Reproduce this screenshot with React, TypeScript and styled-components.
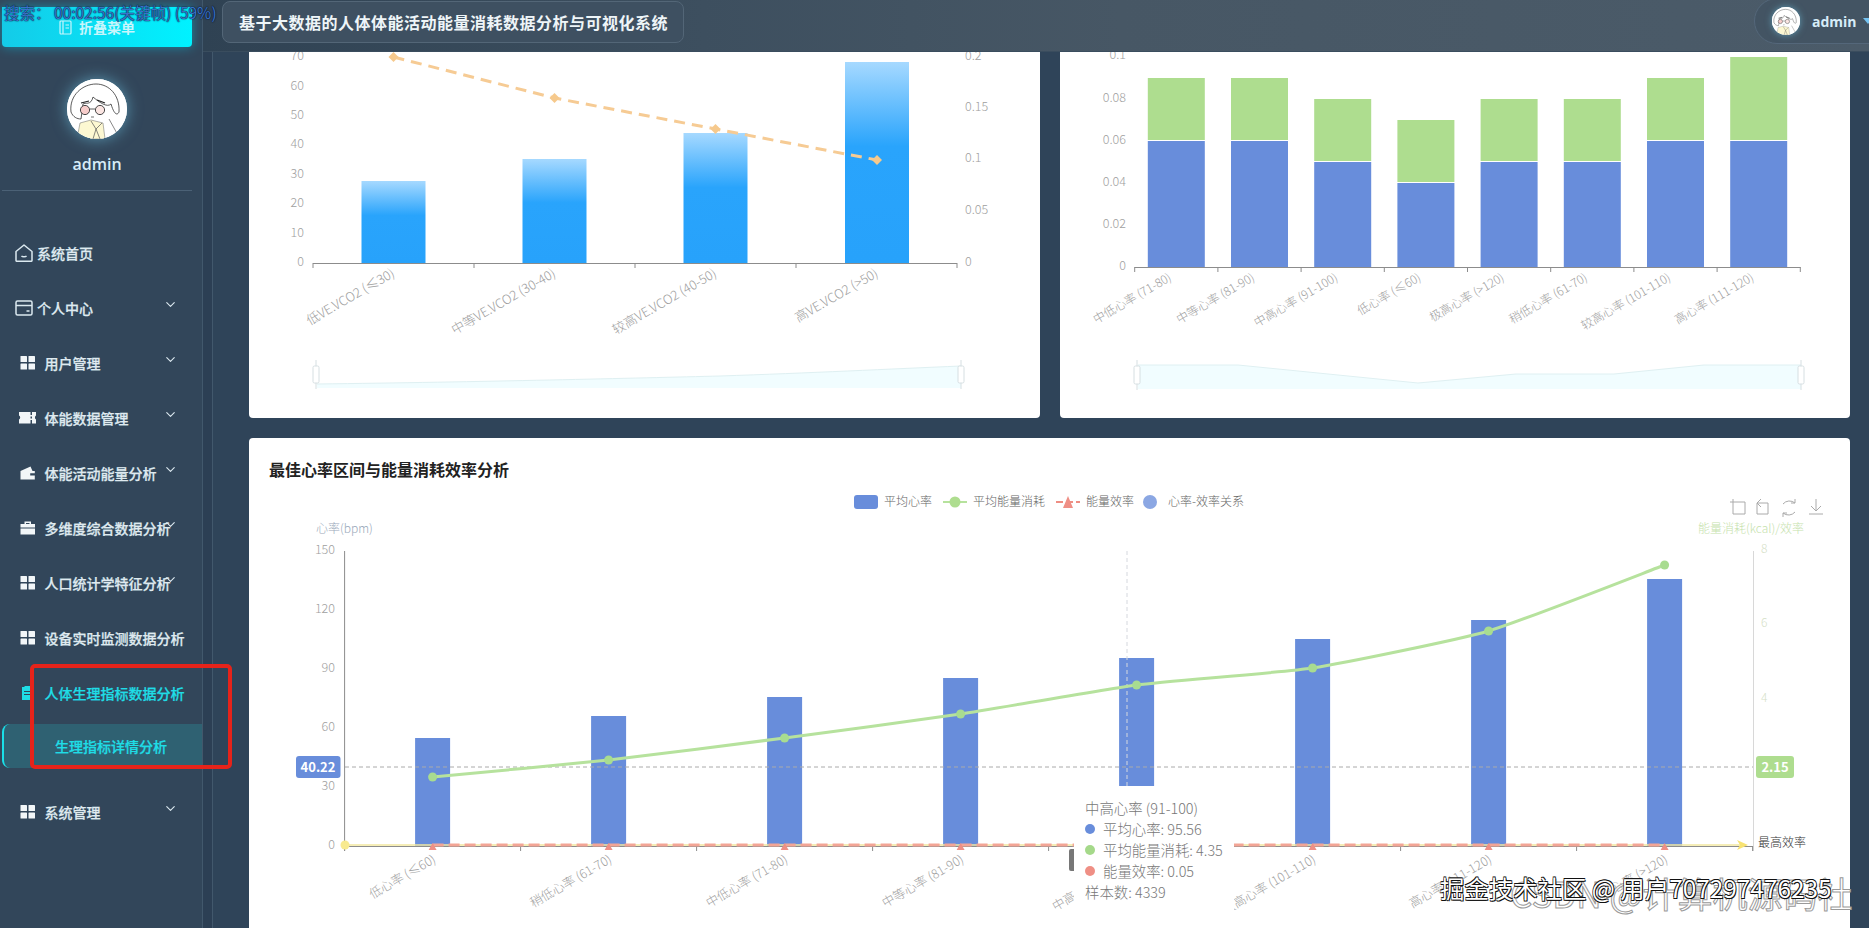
import React from "react";
import styled, { createGlobalStyle } from "styled-components";
import { ChevronDown } from "lucide-react";

const FONT = `"Noto Sans CJK SC", "Noto Sans", "Open Sans", sans-serif`;

const Global = createGlobalStyle`
  html, body { margin: 0; padding: 0; height: 100%; overflow: hidden; background: #2f4459; }
  #root { height: 100%; }
  * { box-sizing: border-box; }
`;

const Page = styled.div`
  position: relative;
  display: flex;
  width: 1869px;
  height: 928px;
  overflow: hidden;
  font-family: ${FONT};
  background: #2f4459;
`;

const Sidebar = styled.aside`
  flex: 0 0 203px;
  height: 100%;
  background: #32465a;
  border-right: 1px solid #42586c;
  display: flex;
  flex-direction: column;
`;

const CollapseButton = styled.button`
  flex: none;
  display: flex;
  align-items: center;
  justify-content: center;
  gap: 7px;
  width: 190px;
  height: 40px;
  margin: 7px 0 0 2px;
  border: 0;
  border-radius: 0 0 4px 4px;
  background: linear-gradient(90deg, #14cbe8, #00f2ff);
  box-shadow: 0 0 12px rgba(0, 220, 255, 0.45);
  color: #c8f6fc;
  font: 700 14px ${FONT};
`;

const Profile = styled.div`
  width: 190px;
  margin: 32px 0 0 2px;
  padding-bottom: 14px;
  border-bottom: 1px solid #4b6176;
  display: flex;
  flex-direction: column;
  align-items: center;
`;

const AvatarFrame = styled.div<{ $size: number }>`
  width: ${(p) => p.$size}px;
  height: ${(p) => p.$size}px;
  border-radius: 50%;
  overflow: hidden;
  background: #fff;
  box-shadow: 0 0 ${(p) => p.$size / 4}px rgba(120, 215, 245, 0.55);
  flex: none;
`;

const ProfileName = styled.div`
  margin-top: 13px;
  font: 600 16px/24px "Open Sans", ${FONT};
  color: #d6ecf8;
`;

const Menu = styled.nav`
  margin-top: 34px;
  display: flex;
  flex-direction: column;
`;

const MenuRow = styled.div<{ $outlined?: boolean; $active?: boolean; $gapAbove?: boolean }>`
  position: relative;
  height: 55px;
  flex: none;
  display: flex;
  align-items: center;
  padding-left: ${(p) => (p.$outlined ? 15 : 20)}px;
  margin-top: ${(p) => (p.$gapAbove ? 16 : 0)}px;
  gap: ${(p) => (p.$outlined ? 4 : 9)}px;
  color: ${(p) => (p.$active ? "#1fdde6" : "#dfeaf0")};
  font-size: 14px;
  font-weight: 500;
  -webkit-text-stroke: 0.25px currentColor;
  white-space: nowrap;
`;

const RowChevron = styled.span`
  position: absolute;
  top: 17px;
  left: 163px;
  display: flex;
  color: #dbe8f0;
`;

const SubRow = styled.div`
  height: 44px;
  margin: 4px 0 0 2px;
  padding-left: 51px;
  display: flex;
  align-items: center;
  border-left: 2px solid #1adfe8;
  border-radius: 8px 0 0 8px;
  background: #2f6172;
  color: #1fdde6;
  font-size: 14px;
  font-weight: 500;
  -webkit-text-stroke: 0.25px currentColor;
  flex: none;
`;

const Main = styled.main`
  flex: 1;
  min-width: 0;
  display: flex;
  flex-direction: column;
  height: 100%;
`;

const Header = styled.header`
  flex: 0 0 52px;
  display: flex;
  align-items: flex-start;
  padding-left: 19px;
  background: linear-gradient(90deg, #2f4253 0, #3d4f5f 30%, #475765 55%, #4b5b69 100%);
  border-bottom: 1px solid #3a4d5e;
`;

const TitlePill = styled.div`
  width: 462px;
  height: 42px;
  margin-top: 1px;
  padding-left: 16px;
  display: flex;
  align-items: center;
  background: #3e5061;
  border: 1px solid #536677;
  border-radius: 8px;
  color: #eef5f8;
  font-size: 16px;
  font-weight: 700;
  letter-spacing: 0.5px;
  white-space: nowrap;
`;

const UserPill = styled.div`
  width: 130px;
  height: 46px;
  margin: -2px -15px 0 auto;
  padding-left: 17px;
  display: flex;
  align-items: center;
  gap: 12px;
  background: #435463;
  border: 1px solid #54677a;
  border-radius: 23px 0 0 23px;
  color: #d6ecf8;
  font: 700 14px "Open Sans", ${FONT};
`;

const Caret = styled.span`
  width: 0;
  height: 0;
  margin-left: -6px;
  border-left: 5px solid transparent;
  border-right: 5px solid transparent;
  border-top: 6px solid #74c2f0;
`;

const Body = styled.div`
  flex: 1;
  min-height: 0;
  display: flex;
`;

const Strip = styled.div`
  flex: 0 0 10px;
  background: #2c3f54;
  border-right: 1px solid #42586c;
`;

const Content = styled.div`
  flex: 1;
  min-width: 0;
  padding: 0 19px 0 36px;
  display: grid;
  grid-template-columns: 791px 790px;
  grid-template-rows: 366px 490px;
  column-gap: 20px;
  row-gap: 20px;
`;

const Card = styled.section<{ $wide?: boolean; $open?: boolean }>`
  position: relative;
  background: #fff;
  border-radius: ${(p) => (p.$open ? "0 0 4px 4px" : "4px 4px 0 0")};
  overflow: hidden;
  grid-column: ${(p) => (p.$wide ? "1 / span 2" : "auto")};
`;

const CardTitle = styled.h3`
  margin: 0;
  height: 44px;
  padding: 20px 20px 0;
  font-size: 16px;
  line-height: 22px;
  font-weight: 700;
  color: #222;
`;

const ChartSvg = styled.svg`
  display: block;
`;

const AxisLabel = styled.text<{ $size?: number }>`
  font-family: ${FONT};
  font-size: ${(p) => p.$size || 12.5}px;
  font-weight: 300;
  fill: #9e9e9e;
`;

const LegendLabel = styled.text`
  font-family: ${FONT};
  font-size: 12px;
  font-weight: 300;
  fill: #666;
`;

const AxisName = styled.text<{ $tone?: string }>`
  font-family: ${FONT};
  font-size: 12px;
  font-weight: 300;
  fill: ${(p) => p.$tone || "#9aa9ba"};
`;

const TagText = styled.text`
  font-family: ${FONT};
  font-size: 13px;
  font-weight: 700;
  fill: #fff;
  text-anchor: middle;
`;

const Tooltip = styled.div`
  position: absolute;
  left: 825px;
  top: 348px;
  width: 160px;
  padding: 11px 8px 12px 11px;
  background: #fff;
  color: #777;
  font-size: 14.4px;
  font-weight: 300;
  line-height: 21px;
  white-space: nowrap;
`;

const TooltipRow = styled.div`
  display: flex;
  align-items: center;
  gap: 8px;
`;

const TooltipDot = styled.span<{ $color: string }>`
  width: 10px;
  height: 10px;
  border-radius: 50%;
  background: ${(p) => p.$color};
`;

const SearchBadge = styled.div`
  position: absolute;
  left: 4px;
  top: 1px;
  font-size: 15.5px;
  line-height: 22px;
  color: #3a72c8;
  text-shadow: 0 0 1.5px #04122e, 0 0 1px #04122e;
  white-space: nowrap;
`;

const RedBox = styled.div`
  position: absolute;
  left: 30px;
  top: 664px;
  width: 202px;
  height: 105px;
  border: 4px solid #e6231a;
  border-radius: 5px;
  pointer-events: none;
`;

const WatermarkBack = styled.div`
  position: absolute;
  left: 1510px;
  top: 868px;
  font-size: 35px;
  line-height: 50px;
  color: rgba(255, 255, 255, 0.85);
  -webkit-text-stroke: 1px #9a9a9a;
  white-space: nowrap;
`;

const WatermarkFront = styled.div`
  position: absolute;
  left: 1440px;
  top: 870px;
  font-size: 24.4px;
  line-height: 36px;
  color: #fff;
  text-shadow: 1px 1px 0 #111, -0.6px 0.6px 0 #111, 0.6px -0.6px 0 #111, -0.6px -0.6px 0 #111;
  white-space: nowrap;
`;

const Avatar = ({ size }: { size: number }) => (
  <AvatarFrame $size={size}>
    <svg width={size} height={size} viewBox="0 0 60 60">
      <rect width="60" height="60" fill="#fff" />
      <path d="M10 60 L13 44 L24 41 L36 44 L38 60 Z" fill="#fdf8d2" stroke="#666" strokeWidth="0.5" />
      <path d="M24 42 L29 50 L35 44 M29 50 L26 60 M29 50 L33 60 M42 40 L52 58" fill="none" stroke="#555" strokeWidth="0.7" />
      <path d="M4 33 C2 16 16 5 29 5 C42 5 53 16 52 33 C50 37 47 35 44 25 C40 29 32 23 26 18 C24 27 18 23 16 25 L14 40 C10 40 6 38 4 33 Z" fill="#fff" stroke="#333" strokeWidth="0.8" />
      <circle cx="18" cy="31" r="4.6" fill="#f7cdcb" stroke="#333" strokeWidth="0.9" />
      <circle cx="33" cy="31" r="4.6" fill="#fbe6e3" stroke="#333" strokeWidth="0.9" />
      <path d="M23 30 L28 30" stroke="#333" strokeWidth="0.8" />
      <path d="M14 24 L22 22 M30 21 L38 24" stroke="#222" strokeWidth="1.2" />
      <path d="M24 38 H27" stroke="#333" strokeWidth="0.7" />
    </svg>
  </AvatarFrame>
);

const MenuIcon = ({ kind, color = "#f2f6f8" }: { kind: string; color?: string }) => {
  if (kind === "home")
    return (
      <svg width="18" height="18" viewBox="0 0 18 18" fill="none" stroke="#dbe9f0" strokeWidth="1.5" strokeLinejoin="round">
        <path d="M9 1 L17 7.5 V16.5 C17 17 16.5 17.3 16 17.3 H2 C1.5 17.3 1 17 1 16.5 V7.5 Z" />
        <path d="M6.5 11.8 C7.4 13.2 10.6 13.2 11.5 11.8" />
      </svg>
    );
  if (kind === "card")
    return (
      <svg width="18" height="18" viewBox="0 0 18 18" fill="none" stroke="#dbe9f0" strokeWidth="1.5">
        <rect x="1" y="2" width="16" height="14" rx="1.5" />
        <path d="M1 6.5 H17 M11.5 12 H14.5" />
      </svg>
    );
  const paths: Record<string, React.ReactNode> = {
    grid: (
      <>
        <rect x="0.5" y="1" width="6.5" height="6" rx="0.6" />
        <rect x="8.5" y="1" width="6.5" height="6" rx="0.6" />
        <rect x="0.5" y="8.5" width="6.5" height="6" rx="0.6" />
        <rect x="8.5" y="8.5" width="6.5" height="6" rx="0.6" />
      </>
    ),
    ticket: (
      <path
        d="M-1 2 H16 V5.5 C14.6 6.2 14.6 8.8 16 9.5 V13.5 H-1 V9.5 C0.6 8.8 0.6 6.2 -1 5.5 Z M10.5 2 V5 H12 V2 Z M10.5 6.5 V8.5 H12 V6.5 Z M10.5 10 V13.5 H12 V10 Z"
        fillRule="evenodd"
      />
    ),
    wallet: <path d="M0.5 6 L10.5 1.5 L12.5 6 H14.8 V8.2 H10.2 V10.6 H14.8 V14.5 H0.5 Z" />,
    case: (
      <>
        <path d="M4.5 1.5 H11 V4 H15 V7.5 H0.5 V4 H4.5 Z M6 3 V4 H9.5 V3 Z" fillRule="evenodd" />
        <rect x="0.5" y="8.5" width="14.5" height="6" />
      </>
    ),
    clip: <path d="M2 2 H4.5 V1 H11 V2 H13 V15 H2 Z M4 6 V7 H11 V6 Z M4 9 V10 H11 V9 Z" fillRule="evenodd" />,
  };
  return (
    <svg width="15.5" height="15.5" viewBox="0 0 15.5 15.5" fill={color} style={{ overflow: "visible" }}>
      {paths[kind]}
    </svg>
  );
};

const menu = [
  { label: "系统首页", icon: "home", outlined: true },
  { label: "个人中心", icon: "card", outlined: true, chevron: true },
  { label: "用户管理", icon: "grid", chevron: true },
  { label: "体能数据管理", icon: "ticket", chevron: true },
  { label: "体能活动能量分析", icon: "wallet", chevron: true },
  { label: "多维度综合数据分析", icon: "case", chevron: true },
  { label: "人口统计学特征分析", icon: "grid", chevron: true },
  { label: "设备实时监测数据分析", icon: "grid" },
];

const smooth = (pts: number[][]) => {
  let d = `M${pts[0][0]} ${pts[0][1]}`;
  for (let i = 0; i < pts.length - 1; i++) {
    const p0 = pts[Math.max(0, i - 1)];
    const p1 = pts[i];
    const p2 = pts[i + 1];
    const p3 = pts[Math.min(pts.length - 1, i + 2)];
    d += ` C${p1[0] + (p2[0] - p0[0]) / 12} ${p1[1] + (p2[1] - p0[1]) / 12} ${p2[0] - (p3[0] - p1[0]) / 12} ${p2[1] - (p3[1] - p1[1]) / 12} ${p2[0]} ${p2[1]}`;
  }
  return d;
};

const RotatedLabel = ({ x, y, text, size = 12 }: { x: number; y: number; text: string; size?: number }) => (
  <AxisLabel $size={size} x={x} y={y} textAnchor="end" transform={`rotate(-30 ${x} ${y})`}>
    {text}
  </AxisLabel>
);

const SliderHandle = ({ x, top, bottom }: { x: number; top: number; bottom: number }) => (
  <g stroke="#d6dfe2" fill="#fff">
    <path d={`M${x} ${top} V${bottom}`} />
    <rect x={x - 3} y={top + 6} width="6" height={bottom - top - 12} rx="1.5" />
  </g>
);

const TopLeftChart = () => {
  const ticks = [313, 474, 635, 796, 957];
  const centers = [393.5, 554.5, 715.5, 877];
  const tops = [181, 159, 133, 62];
  const line = [57, 98, 129, 160];
  const names = ["低VE.VCO2 (≤30)", "中等VE.VCO2 (30-40)", "较高VE.VCO2 (40-50)", "高VE.VCO2 (>50)"];
  const left = [[0, 264], [10, 235], [20, 205], [30, 176], [40, 146], [50, 117], [60, 88], [70, 58]];
  const right = [["0", 264], ["0.05", 212], ["0.1", 160], ["0.15", 109], ["0.2", 58]] as [string, number][];
  return (
    <ChartSvg width="791" height="366" viewBox="249 52 791 366">
      <defs>
        <linearGradient id="barBlue" x1="0" y1="0" x2="0" y2="1">
          <stop offset="0" stopColor="#a6d9ff" />
          <stop offset="0.42" stopColor="#29a4fc" />
          <stop offset="1" stopColor="#27a2fb" />
        </linearGradient>
      </defs>
      {left.map(([v, y]) => (
        <AxisLabel key={v} x={304} y={y + 2} textAnchor="end">{v}</AxisLabel>
      ))}
      {right.map(([v, y]) => (
        <AxisLabel key={v} x={965} y={y + 2}>{v}</AxisLabel>
      ))}
      {centers.map((c, i) => (
        <rect key={c} x={c - 32} y={tops[i]} width="64" height={263 - tops[i]} fill="url(#barBlue)" />
      ))}
      <path d={`M313 263.5 H957`} stroke="#8c8c8c" />
      {ticks.map((t) => (
        <path key={t} d={`M${t} 263 V268`} stroke="#8c8c8c" />
      ))}
      <path d={`M${centers.map((c, i) => `${c} ${line[i]}`).join(" L")}`} fill="none" stroke="#f6cb94" strokeWidth="3" strokeDasharray="11 7" />
      {centers.map((c, i) => (
        <path key={c} d={`M${c} ${line[i] - 5} L${c + 5} ${line[i]} L${c} ${line[i] + 5} L${c - 5} ${line[i]} Z`} fill="#f6c98c" />
      ))}
      {centers.map((c, i) => (
        <RotatedLabel key={c} x={c + 2} y={276} text={names[i]} size={13} />
      ))}
      <path d="M317 384 C480 382 640 378 720 376 C810 373 890 369 961 366 V388 H317 Z" fill="#f1fdff" stroke="none" />
      <path d="M317 384 C480 382 640 378 720 376 C810 373 890 369 961 366" fill="none" stroke="#dff0f2" />
      <SliderHandle x={316} top={360} bottom={389} />
      <SliderHandle x={961} top={360} bottom={389} />
    </ChartSvg>
  );
};

const TopRightChart = () => {
  const labels = ["中低心率 (71-80)", "中等心率 (81-90)", "中高心率 (91-100)", "低心率 (≤60)", "极高心率 (>120)", "稍低心率 (61-70)", "较高心率 (101-110)", "高心率 (111-120)"];
  const blue = [0.06, 0.06, 0.05, 0.04, 0.05, 0.05, 0.06, 0.06];
  const total = [0.09, 0.09, 0.08, 0.07, 0.08, 0.08, 0.09, 0.1];
  const base = 267;
  const unit = 2100;
  const xs = Array.from({ length: 9 }, (_, i) => 1134.7 + i * 83.2);
  const area = [[1138, 365], [1238, 365], [1418, 383], [1516, 374], [1614, 374], [1704, 365], [1801, 365]];
  const areaD = area.map((p) => `${p[0]} ${p[1]}`).join(" L");
  return (
    <ChartSvg width="790" height="366" viewBox="1060 52 790 366">
      {["0", "0.02", "0.04", "0.06", "0.08", "0.1"].map((v, i) => (
        <AxisLabel key={v} x={1126} y={base - i * 42 + (i === 5 ? 2 : 3)} textAnchor="end">{v}</AxisLabel>
      ))}
      {labels.map((l, i) => {
        const c = xs[i] + 41.6;
        return (
          <g key={l}>
            <rect x={c - 28.5} y={base - blue[i] * unit} width="57" height={blue[i] * unit} fill="#688ddb" />
            <rect x={c - 28.5} y={base - total[i] * unit} width="57" height={(total[i] - blue[i]) * unit - 1} fill="#aedd8f" />
            <RotatedLabel x={c - 4} y={280} text={l} />
          </g>
        );
      })}
      <path d={`M1134.7 267.5 H1800.5`} stroke="#8c8c8c" />
      {xs.map((t) => (
        <path key={t} d={`M${t} 267 V272`} stroke="#8c8c8c" />
      ))}
      <path d={`M${areaD} V389 H1138 Z`} fill="#f1fdff" />
      <path d={`M${areaD}`} fill="none" stroke="#dff0f2" />
      <SliderHandle x={1137} top={360} bottom={390} />
      <SliderHandle x={1801} top={360} bottom={390} />
    </ChartSvg>
  );
};

const BottomChart = () => {
  const base = 846;
  const labels = ["低心率 (≤60)", "稍低心率 (61-70)", "中低心率 (71-80)", "中等心率 (81-90)", "中高心率 (91-100)", "较高心率 (101-110)", "高心率 (111-120)", "极高心率 (>120)"];
  const centers = labels.map((_, i) => 432.6 + i * 176);
  const tops = [738, 716, 697, 678, 658, 639, 620, 579];
  const ys = [777, 760, 738, 714, 685, 668, 631, 565];
  const pts = centers.map((c, i) => [c, ys[i]]);
  const ticks = Array.from({ length: 9 }, (_, i) => 344.6 + i * 176);
  const leftLabels = [0, 30, 60, 90, 120, 150];
  const rightLabels = [[8, 553], [6, 627], [4, 702]];
  return (
    <ChartSvg width="1601" height="446" viewBox="249 482 1601 446">
      <rect x="854" y="495" width="24" height="14" rx="3" fill="#688ddb" />
      <LegendLabel x="884" y="506">平均心率</LegendLabel>
      <path d="M943 502 H967" stroke="#b6e29d" strokeWidth="2" />
      <circle cx="955" cy="502" r="5.5" fill="#aedd8f" />
      <LegendLabel x="973" y="506">平均能量消耗</LegendLabel>
      <path d="M1056 502 H1080" stroke="#ee8e83" strokeWidth="2" strokeDasharray="7 3" />
      <path d="M1068 496 L1073 508 H1063 Z" fill="#ef8f85" />
      <LegendLabel x="1086" y="506">能量效率</LegendLabel>
      <circle cx="1150" cy="502" r="7" fill="#8ba7e3" />
      <LegendLabel x="1168" y="506">心率-效率关系</LegendLabel>

      <g fill="none" stroke="#aaa" strokeWidth="1">
        <path d="M1733 499 V514 H1745 V502 H1730" />
        <path d="M1757 503 H1768 V514 H1757 V503 M1761 499 L1757 503 L1761 507" />
        <path d="M1783 504 A8.5 8.5 0 0 1 1795 503 M1795 512 A8.5 8.5 0 0 1 1783 513" />
        <path d="M1795 499 V503 H1791 M1783 517 V513 H1787" />
        <path d="M1816 499 V511 M1811 506 L1816 511 L1821 506 M1809 514 H1823" />
      </g>

      <AxisName x="316" y="533">心率(bpm)</AxisName>
      <AxisName x="1698" y="533" $tone="#c6e2ad">能量消耗(kcal)/效率</AxisName>

      {leftLabels.map((v) => (
        <AxisLabel key={v} x={335} y={base - v * 1.967 + 3} textAnchor="end">{v}</AxisLabel>
      ))}
      {rightLabels.map(([v, y]) => (
        <AxisName key={v} x="1761" y={y} $tone="#d6dfc8">{v}</AxisName>
      ))}

      {centers.map((c, i) => (
        <rect key={c} x={c - 17.5} y={tops[i]} width="35" height={base - tops[i]} fill="#688ddb" />
      ))}

      <path d="M345 767 H1753" stroke="#aaa" strokeDasharray="4 3" />
      <path d="M1127 551 V846" stroke="#d5d8de" strokeDasharray="4 3" />

      <path d="M344.6 551 V851" stroke="#8c8c8c" />
      <path d="M1753.5 551 V851" stroke="#d8d8d8" />
      <path d="M344.6 846.5 H1753" stroke="#8c8c8c" />
      {ticks.map((t) => (
        <path key={t} d={`M${t} 846 V851`} stroke="#8c8c8c" />
      ))}
      <path d="M345 845 H1745" stroke="#f2e79f" strokeWidth="1.5" />
      <path d={`M${centers[0]} 845 H${centers[7]}`} stroke="#f3a596" strokeWidth="3" strokeDasharray="11 5" />
      {centers.map((c) => (
        <path key={c} d={`M${c} 843 L${c + 4} 850 H${c - 4} Z`} fill="#ef8f85" />
      ))}
      <circle cx="345" cy="845" r="4.5" fill="#f8ea90" />
      <path d="M1737 840 L1748 845 L1737 850 L1740 845 Z" fill="#f8e373" />
      <LegendLabel x="1758" y="847" style={{ fill: "#333" }}>最高效率</LegendLabel>

      <path d={smooth(pts)} fill="none" stroke="#b6e29d" strokeWidth="3" />
      {pts.map(([x, y]) => (
        <circle key={x} cx={x} cy={y} r="4.5" fill="#a8dc90" />
      ))}

      <rect x="296" y="756" width="44.5" height="22" rx="3" fill="#688ddb" />
      <TagText x="318" y="772">40.22</TagText>
      <rect x="1756" y="756" width="38" height="22" rx="3" fill="#aedd8f" />
      <TagText x="1775" y="772">2.15</TagText>

      {centers.map((c, i) => (
        <RotatedLabel key={c} x={c + 4} y={862} text={labels[i]} size={12.5} />
      ))}
      <rect x="1069" y="849" width="12" height="22" rx="2" fill="#777" />
    </ChartSvg>
  );
};

export default function App() {
  return (
    <>
      <Global />
      <Page>
        <Sidebar>
          <CollapseButton>
            <svg width="13" height="15" viewBox="0 0 13 15" fill="none" stroke="#c8f6fc" strokeWidth="1.2">
              <rect x="1" y="1" width="11" height="13" rx="1" />
              <path d="M4 1 V14 M6.5 5 H10 M6.5 8 H10" />
            </svg>
            折叠菜单
          </CollapseButton>
          <Profile>
            <Avatar size={60} />
            <ProfileName>admin</ProfileName>
          </Profile>
          <Menu>
            {menu.map((m) => (
              <MenuRow key={m.label} $outlined={m.outlined}>
                <MenuIcon kind={m.icon} />
                {m.label}
                {m.chevron && (
                  <RowChevron>
                    <ChevronDown size={15} strokeWidth={1.8} />
                  </RowChevron>
                )}
              </MenuRow>
            ))}
            <MenuRow $active>
              <MenuIcon kind="clip" color="#1fdde6" />
              人体生理指标数据分析
            </MenuRow>
            <SubRow>生理指标详情分析</SubRow>
            <MenuRow $gapAbove>
              <MenuIcon kind="grid" />
              系统管理
              <RowChevron>
                <ChevronDown size={15} strokeWidth={1.8} />
              </RowChevron>
            </MenuRow>
          </Menu>
        </Sidebar>
        <Main>
          <Header>
            <TitlePill>基于大数据的人体体能活动能量消耗数据分析与可视化系统</TitlePill>
            <UserPill>
              <Avatar size={28} />
              admin
              <Caret />
            </UserPill>
          </Header>
          <Body>
            <Strip />
            <Content>
              <Card $open>
                <TopLeftChart />
              </Card>
              <Card $open>
                <TopRightChart />
              </Card>
              <Card $wide>
                <CardTitle>最佳心率区间与能量消耗效率分析</CardTitle>
                <BottomChart />
                <Tooltip>
                  中高心率 (91-100)
                  <TooltipRow><TooltipDot $color="#688ddb" />平均心率: 95.56</TooltipRow>
                  <TooltipRow><TooltipDot $color="#a5d98a" />平均能量消耗: 4.35</TooltipRow>
                  <TooltipRow><TooltipDot $color="#ef8f85" />能量效率: 0.05</TooltipRow>
                  样本数: 4339
                </Tooltip>
              </Card>
            </Content>
          </Body>
        </Main>
        <SearchBadge>搜索： 00:02:56(关键帧) (59%)</SearchBadge>
        <RedBox />
        <WatermarkBack>CSDN @计算机源码社</WatermarkBack>
        <WatermarkFront>掘金技术社区 @ 用户707297476235</WatermarkFront>
      </Page>
    </>
  );
}
